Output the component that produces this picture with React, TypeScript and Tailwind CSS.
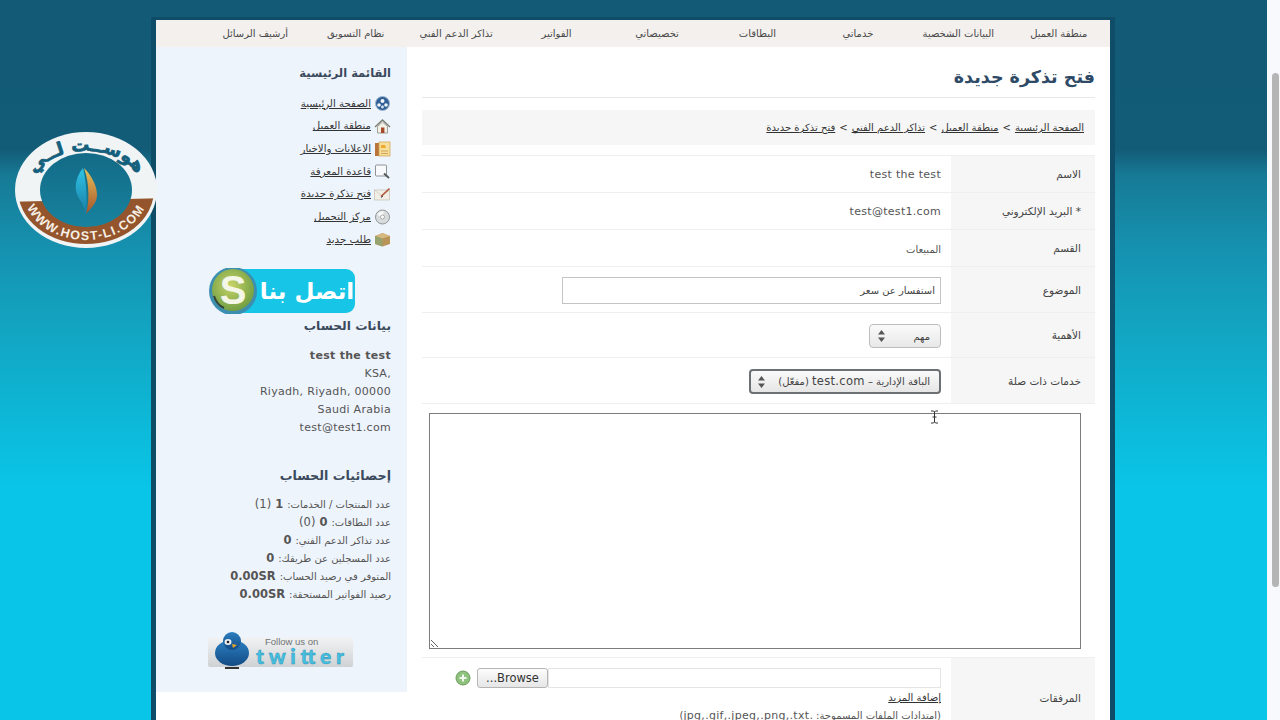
import React from "react";

const font = { fontFamily: '"DejaVu Sans", sans-serif' };

const navItems = [
  "منطقة العميل",
  "البيانات الشخصية",
  "خدماتي",
  "البطاقات",
  "تخصيصاتي",
  "الفواتير",
  "تذاكر الدعم الفني",
  "نظام التسويق",
  "أرشيف الرسائل",
];

const GlobeIcon = () => (
  <svg width="17" height="15" viewBox="0 0 17 15">
    <circle cx="8.5" cy="7.5" r="7" fill="#2f5f94" stroke="#9fb6cf" />
    <circle cx="8.5" cy="5" r="2" fill="#f2f6fb" />
    <circle cx="5" cy="9" r="1.8" fill="#f2f6fb" />
    <circle cx="12" cy="9" r="1.8" fill="#f2f6fb" />
    <circle cx="8.5" cy="11" r="1.4" fill="#dbe6f2" />
  </svg>
);
const HouseIcon = () => (
  <svg width="17" height="15" viewBox="0 0 17 15">
    <path d="M1 8 8.5 1 16 8" fill="none" stroke="#7d7f76" strokeWidth="1.4" />
    <path d="M3.5 7.5V14h10V7.5L8.5 3z" fill="#f4f1e6" stroke="#8c8c80" strokeWidth=".8" />
    <rect x="7" y="8.5" width="3.4" height="5.5" fill="#a5492a" />
  </svg>
);
const NewsIcon = () => (
  <svg width="17" height="16" viewBox="0 0 17 16">
    <rect x="1" y="2" width="5" height="13" fill="#b9743a" />
    <rect x="5" y="1" width="11" height="14" fill="#f6df9a" stroke="#cfa24e" strokeWidth=".7" />
    <path d="M7 4h4l1 3H7z" fill="#f0a92e" />
    <path d="M7 10h7M7 12.5h7" stroke="#c9964a" strokeWidth=".8" />
  </svg>
);
const SearchIcon = () => (
  <svg width="17" height="15" viewBox="0 0 17 15">
    <rect x="1.5" y="1" width="11" height="11" rx="1" fill="#f7f9fb" stroke="#8e9498" strokeWidth="1" />
    <path d="M10 9.5 15 14" stroke="#55585a" strokeWidth="1.8" />
  </svg>
);
const TicketIcon = () => (
  <svg width="17" height="14" viewBox="0 0 17 14">
    <rect x=".5" y="3" width="15" height="10" fill="#f1eee6" stroke="#c2bfb4" strokeWidth=".7" />
    <path d="M.5 3 8 9l7.5-6" fill="none" stroke="#cfccc2" strokeWidth=".7" />
    <path d="M7 9.5 15.5 1.5" stroke="#b4553a" strokeWidth="1.6" />
    <path d="M7 10.5 9 9" stroke="#444" strokeWidth="1" />
  </svg>
);
const DiscIcon = () => (
  <svg width="17" height="16" viewBox="0 0 17 16">
    <circle cx="8.5" cy="8" r="7" fill="#d9dcdc" stroke="#8b8f8f" strokeWidth=".9" />
    <path d="M3.5 6A6 6 0 0 1 10 2.4L8.5 8z" fill="#f7f8f8" />
    <circle cx="8.5" cy="8" r="2" fill="#fff" stroke="#8b8f8f" strokeWidth=".7" />
  </svg>
);
const BoxIcon = () => (
  <svg width="17" height="15" viewBox="0 0 17 15">
    <path d="M1 4 8.5 1 16 4v8l-7.5 2.5L1 12z" fill="#b89458" />
    <path d="M1 4l7.5 2.5L16 4 8.5 1z" fill="#d6b981" />
    <path d="M1 4l7.5 2.5v8L1 12z" fill="#97a26c" />
  </svg>
);

const menuItems: [React.ReactNode, string][] = [
  [<GlobeIcon />, "الصفحة الرئيسية"],
  [<HouseIcon />, "منطقة العميل"],
  [<NewsIcon />, "الاعلانات والاخبار"],
  [<SearchIcon />, "قاعدة المعرفة"],
  [<TicketIcon />, "فتح تذكرة جديدة"],
  [<DiscIcon />, "مركز التحميل"],
  [<BoxIcon />, "طلب جديد"],
];

const stats: [string, string, string][] = [
  ["عدد المنتجات / الخدمات:", "1", "(1)"],
  ["عدد النطاقات:", "0", "(0)"],
  ["عدد تذاكر الدعم الفني:", "0", ""],
  ["عدد المسجلين عن طريقك:", "0", ""],
  ["المتوفر في رصيد الحساب:", "0.00SR", ""],
  ["رصيد الفواتير المستحقة:", "0.00SR", ""],
];

const Logo = () => (
  <svg className="absolute left-[14px] top-[130px]" width="144" height="120" viewBox="14 130 144 120">
    <defs>
      <clipPath id="band">
        <polygon points="0,202 172,198 172,260 0,260" />
      </clipPath>
      <linearGradient id="inner" x1="0" y1="0" x2="0" y2="1">
        <stop offset="0" stopColor="#136a86" />
        <stop offset="1" stopColor="#17839f" />
      </linearGradient>
      <linearGradient id="flameA" x1="0" y1="0" x2="0" y2="1">
        <stop offset="0" stopColor="#2fc4e6" />
        <stop offset="1" stopColor="#1a7da6" />
      </linearGradient>
      <linearGradient id="flameB" x1="0" y1="0" x2="0" y2="1">
        <stop offset="0" stopColor="#e8c25a" />
        <stop offset="1" stopColor="#a5532a" />
      </linearGradient>
      <path id="topArc" d="M30 190A56 39 0 0 1 142 190" />
      <path id="bottomArc" d="M23 190A63 50 0 0 0 149 190" />
    </defs>
    <ellipse cx="86" cy="190" rx="71" ry="58" fill="#f1f4f5" />
    <ellipse cx="86" cy="190" rx="68" ry="54" fill="#94552c" clipPath="url(#band)" />
    <ellipse cx="86" cy="190" rx="46" ry="37" fill="url(#inner)" />
    <text fontSize="18" fontWeight="700" fill="#14607c" stroke="#14607c" strokeWidth=".7" style={font}>
      <textPath href="#topArc" startOffset="50%" textAnchor="middle">هوســت لــي</textPath>
    </text>
    <text fontSize="12.5" fontWeight="700" fill="#f6efe6" letterSpacing="1.4" style={{ fontFamily: '"Liberation Sans", sans-serif' }}>
      <textPath href="#bottomArc" startOffset="50%" textAnchor="middle">WWW.HOST-LI.COM</textPath>
    </text>
    <path d="M83 168C75 178 73 190 80 200c3 5 5 9 6 14 1-12 1-30-3-46z" fill="url(#flameA)" />
    <path d="M84 168c8 8 13 18 13 27 0 8-6 13-11 19 3-10 4-30-2-46z" fill="url(#flameB)" />
  </svg>
);

const SkypeButton = () => (
  <svg width="148" height="46" viewBox="0 0 148 46" className="block">
    <defs>
      <radialGradient id="skype" cx=".45" cy=".4" r=".65">
        <stop offset="0" stopColor="#c9d468" />
        <stop offset="1" stopColor="#6a9a40" />
      </radialGradient>
    </defs>
    <rect x="22" y="1" width="125" height="44" rx="9" fill="#17c6e6" />
    <circle cx="25" cy="23" r="24" fill="#3c8fb0" />
    <circle cx="25" cy="22" r="21" fill="url(#skype)" />
    <text x="25" y="36" textAnchor="middle" fontSize="40" fontWeight="700" fill="#f4f6e8" style={{ fontFamily: '"Liberation Sans", sans-serif' }}>S</text>
    <path d="M6 28c2 6 5 10 10 12" fill="none" stroke="#33443a" strokeWidth="2" />
    <text x="99" y="31" textAnchor="middle" fontSize="23" fontWeight="700" fill="#fff" style={font}>اتصل بنا</text>
  </svg>
);

const TwitterBadge = () => (
  <svg width="146" height="40" viewBox="0 0 146 40" className="block">
    <defs>
      <linearGradient id="badge" x1="0" y1="0" x2="0" y2="1">
        <stop offset="0" stopColor="#f2f3f4" />
        <stop offset="1" stopColor="#cfd2d4" />
      </linearGradient>
      <linearGradient id="bird" x1="0" y1="0" x2="0" y2="1">
        <stop offset="0" stopColor="#2c7fc0" />
        <stop offset="1" stopColor="#124b86" />
      </linearGradient>
    </defs>
    <rect x="0" y="6" width="145" height="30" rx="2" fill="url(#badge)" />
    <ellipse cx="24" cy="22" rx="17" ry="13" fill="url(#bird)" />
    <circle cx="24" cy="10" r="9" fill="url(#bird)" />
    <ellipse cx="20" cy="11" rx="3.5" ry="3" fill="#e8eef4" />
    <circle cx="20" cy="11" r="1.3" fill="#222" />
    <path d="M24 13l5 1-4 3z" fill="#e6a52a" />
    <path d="M17 37h14" stroke="#333" strokeWidth="2" />
    <text x="57" y="14" fontSize="9.5" fill="#6f7376" style={{ fontFamily: '"Liberation Sans", sans-serif' }}>Follow us on</text>
    <text x="48" y="33" fontSize="21" fontWeight="900" fill="#45bfe0" stroke="#2c8fb4" strokeWidth=".4" textLength="88" style={{ fontFamily: "Lato, sans-serif" }}>twitter</text>
  </svg>
);

const Row = ({ label, h, children }: { label: string; h: string; children: React.ReactNode }) => (
  <div className={`flex border-b border-[#efefef] ${h}`}>
    <div className="flex w-[144px] shrink-0 items-center bg-[#f6f6f6] pr-[14px] pt-[2px] text-[10.5px] text-[#444]">{label}</div>
    <div className="flex flex-1 items-center pr-[10px] pt-[2px] text-[11px] text-[#555]">{children}</div>
  </div>
);

const SelectArrows = () => (
  <svg width="7" height="12" viewBox="0 0 7 12">
    <path d="M3.5 0 7 4.5H0zM3.5 12 0 7.5h7z" fill="#555" />
  </svg>
);

export default function App() {
  return (
    <div dir="ltr" className="relative flex h-[720px] w-[1280px] overflow-hidden bg-[#f7f9fc]" style={font}>
      <div className="h-full w-[1267px] bg-[linear-gradient(180deg,#125a76_0px,#135c78_150px,#177a95_175px,#1592b0_250px,#12a5c2_330px,#0cbcdc_440px,#09c5e8_490px)] pl-[151px] pt-[17px]">
        <div className="h-[703px] w-[964px] border-x-[5px] border-t-[3px] border-[#0f4c68] bg-white">
          <div className="h-[27px] bg-[#f3f0ee] pl-[49px] pr-[1px]">
            <div dir="rtl" className="grid h-full grid-cols-9 items-center text-[10px] text-[#4a4a4a]">
              {navItems.map((item) => (
                <div key={item} className="text-center">{item}</div>
              ))}
            </div>
          </div>

          <div className="flex h-[673px]">
            <aside dir="rtl" className="h-[645px] w-[251px] shrink-0 bg-[#eef4fc] pr-[16px] text-[#555]">
              <h2 className="mt-[17px] flex h-[20px] items-center text-[11.5px] font-bold text-[#3b4a5c]">القائمة الرئيسية</h2>
              <ul className="mt-[8px]">
                {menuItems.map(([icon, label]) => (
                  <li key={label} className="flex h-[22.7px] items-center gap-[3px] text-[10.2px] text-[#333]">
                    <span className="flex w-[17px] justify-center">{icon}</span>
                    <span className="underline">{label}</span>
                  </li>
                ))}
              </ul>
              <div className="mr-[35px] mt-[17px] flex justify-start" dir="ltr">
                <div className="ml-[52px]"><SkypeButton /></div>
              </div>
              <h2 className="mt-[2px] flex h-[20px] items-center text-[12.3px] font-bold text-[#3b4a5c]">بيانات الحساب</h2>
              <div className="mt-[11px] text-[11px] leading-[18px] tracking-[0.3px]">
                <div dir="ltr" className="text-right font-bold">test the test</div>
                <div dir="ltr" className="text-right">KSA,</div>
                <div dir="ltr" className="text-right">Riyadh, Riyadh, 00000</div>
                <div dir="ltr" className="text-right">Saudi Arabia</div>
                <div dir="ltr" className="text-right">test@test1.com</div>
              </div>
              <h2 className="mt-[29px] flex h-[20px] items-center text-[12.7px] font-bold text-[#3b4a5c]">إحصائيات الحساب</h2>
              <div className="mt-[10px] text-[10px]">
                {stats.map(([label, value, count]) => (
                  <div key={label} className="flex h-[18px] items-center gap-[4px]">
                    <span>{label}</span>
                    <b dir="ltr" className="text-[11.5px]">{value}</b>
                    {count && <span className="text-[11.5px]">{count}</span>}
                  </div>
                ))}
              </div>
              <div dir="ltr" className="mt-[27px] flex justify-end pr-[37px]"><TwitterBadge /></div>
            </aside>

            <main dir="rtl" className="flex-1 px-[15px] text-[#555]">
              <h1 className="mt-[11px] flex h-[40px] items-center border-b border-[#e8e8e8] text-[17.5px] font-bold text-[#2e4a66]">فتح تذكرة جديدة</h1>
              <div className="mt-[12px] flex h-[35px] items-center gap-[4px] bg-[#f6f6f6] pr-[11px] text-[10px] text-[#333]">
                <span className="underline">الصفحة الرئيسية</span><span>&gt;</span>
                <span className="underline">منطقة العميل</span><span>&gt;</span>
                <span className="underline">تذاكر الدعم الفني</span><span>&gt;</span>
                <span className="underline">فتح تذكرة جديدة</span>
              </div>

              <div className="mt-[10px] border-t border-[#efefef]">
                <Row label="الاسم" h="h-[37px]"><span dir="ltr" className="tracking-[0.3px]">test the test</span></Row>
                <Row label="* البريد الإلكتروني" h="h-[37px]"><span dir="ltr" className="tracking-[0.3px]">test@test1.com</span></Row>
                <Row label="القسم" h="h-[37px]"><span className="text-[10px]">المبيعات</span></Row>
                <Row label="الموضوع" h="h-[46px]">
                  <input
                    readOnly
                    value="استفسار عن سعر"
                    className="h-[27px] w-[379px] border border-[#c4c4c4] bg-white px-[5px] text-[10px] text-[#444] outline-none"
                  />
                </Row>
                <Row label="الأهمية" h="h-[45px]">
                  <div className="flex h-[24px] w-[72px] items-center justify-between rounded-[4px] border border-[#bdbdbd] bg-[linear-gradient(180deg,#fafafa,#e8e8e8)] pl-[8px] pr-[10px] text-[10px] text-[#444]">
                    <span>مهم</span><SelectArrows />
                  </div>
                </Row>
                <Row label="خدمات ذات صلة" h="h-[46px]">
                  <div className="flex h-[25px] w-[192px] items-center justify-between rounded-[4px] border-[2px] border-[#6c7073] bg-[linear-gradient(180deg,#fafafa,#e6e6e6)] pl-[7px] pr-[9px] text-[10px] text-[#444]">
                    <span className="whitespace-nowrap">الباقة الإدارية – <span className="text-[11.5px] tracking-[0.3px]">test.com</span> (مفعّل)</span><SelectArrows />
                  </div>
                </Row>
                <div className="h-[254px] border-b border-[#efefef] pl-[7px] pr-[14px] pt-[9px]">
                  <textarea readOnly className="block h-[236px] w-[652px] border border-[#7c7c7c] bg-white outline-none" />
                </div>
                <Row label="المرفقات" h="h-[80px]">
                  <div className="flex h-full flex-col pt-[8px]">
                    <div className="flex items-center">
                      <div className="h-[20px] w-[393px] border border-[#e4e4e4] bg-white" />
                      <div dir="ltr" className="h-[20px] w-[71px] rounded-[3px] border border-[#b5b5b5] bg-[linear-gradient(180deg,#fcfcfc,#e6e6e6)] text-center text-[11.5px] leading-[18px] text-[#333]">...Browse</div>
                      <svg className="mr-[6px]" width="16" height="16" viewBox="0 0 16 16">
                        <circle cx="8" cy="8" r="7" fill="#8fc27c" stroke="#6d9b60" />
                        <path d="M8 4.5v7M4.5 8h7" stroke="#f2f8ee" strokeWidth="2" />
                      </svg>
                    </div>
                    <span className="mt-[3px] text-[10px] leading-[14px] text-[#333] underline">إضافة المزيد</span>
                    <span className="mt-[4px] whitespace-nowrap text-[10px] leading-[14px]">(امتدادات الملفات المسموحة: <span className="text-[11px] tracking-[0.3px]">.jpg,.gif,.jpeg,.png,.txt</span>)</span>
                  </div>
                </Row>
              </div>
            </main>
          </div>
        </div>
      </div>

      <div className="relative w-[13px] shrink-0">
        <div className="absolute left-[5px] top-[73px] h-[514px] w-[7px] rounded-[4px] bg-[#b5b5b5]" />
      </div>

      <Logo />
      <svg className="absolute left-[930px] top-[410px]" width="9" height="14" viewBox="0 0 9 14">
        <path d="M1 1h2.5l1 1 1-1H8M4.5 2v10M1 13h2.5l1-1 1 1H8M2.5 7h4" fill="none" stroke="#333" strokeWidth="1" />
      </svg>
    </div>
  );
}
